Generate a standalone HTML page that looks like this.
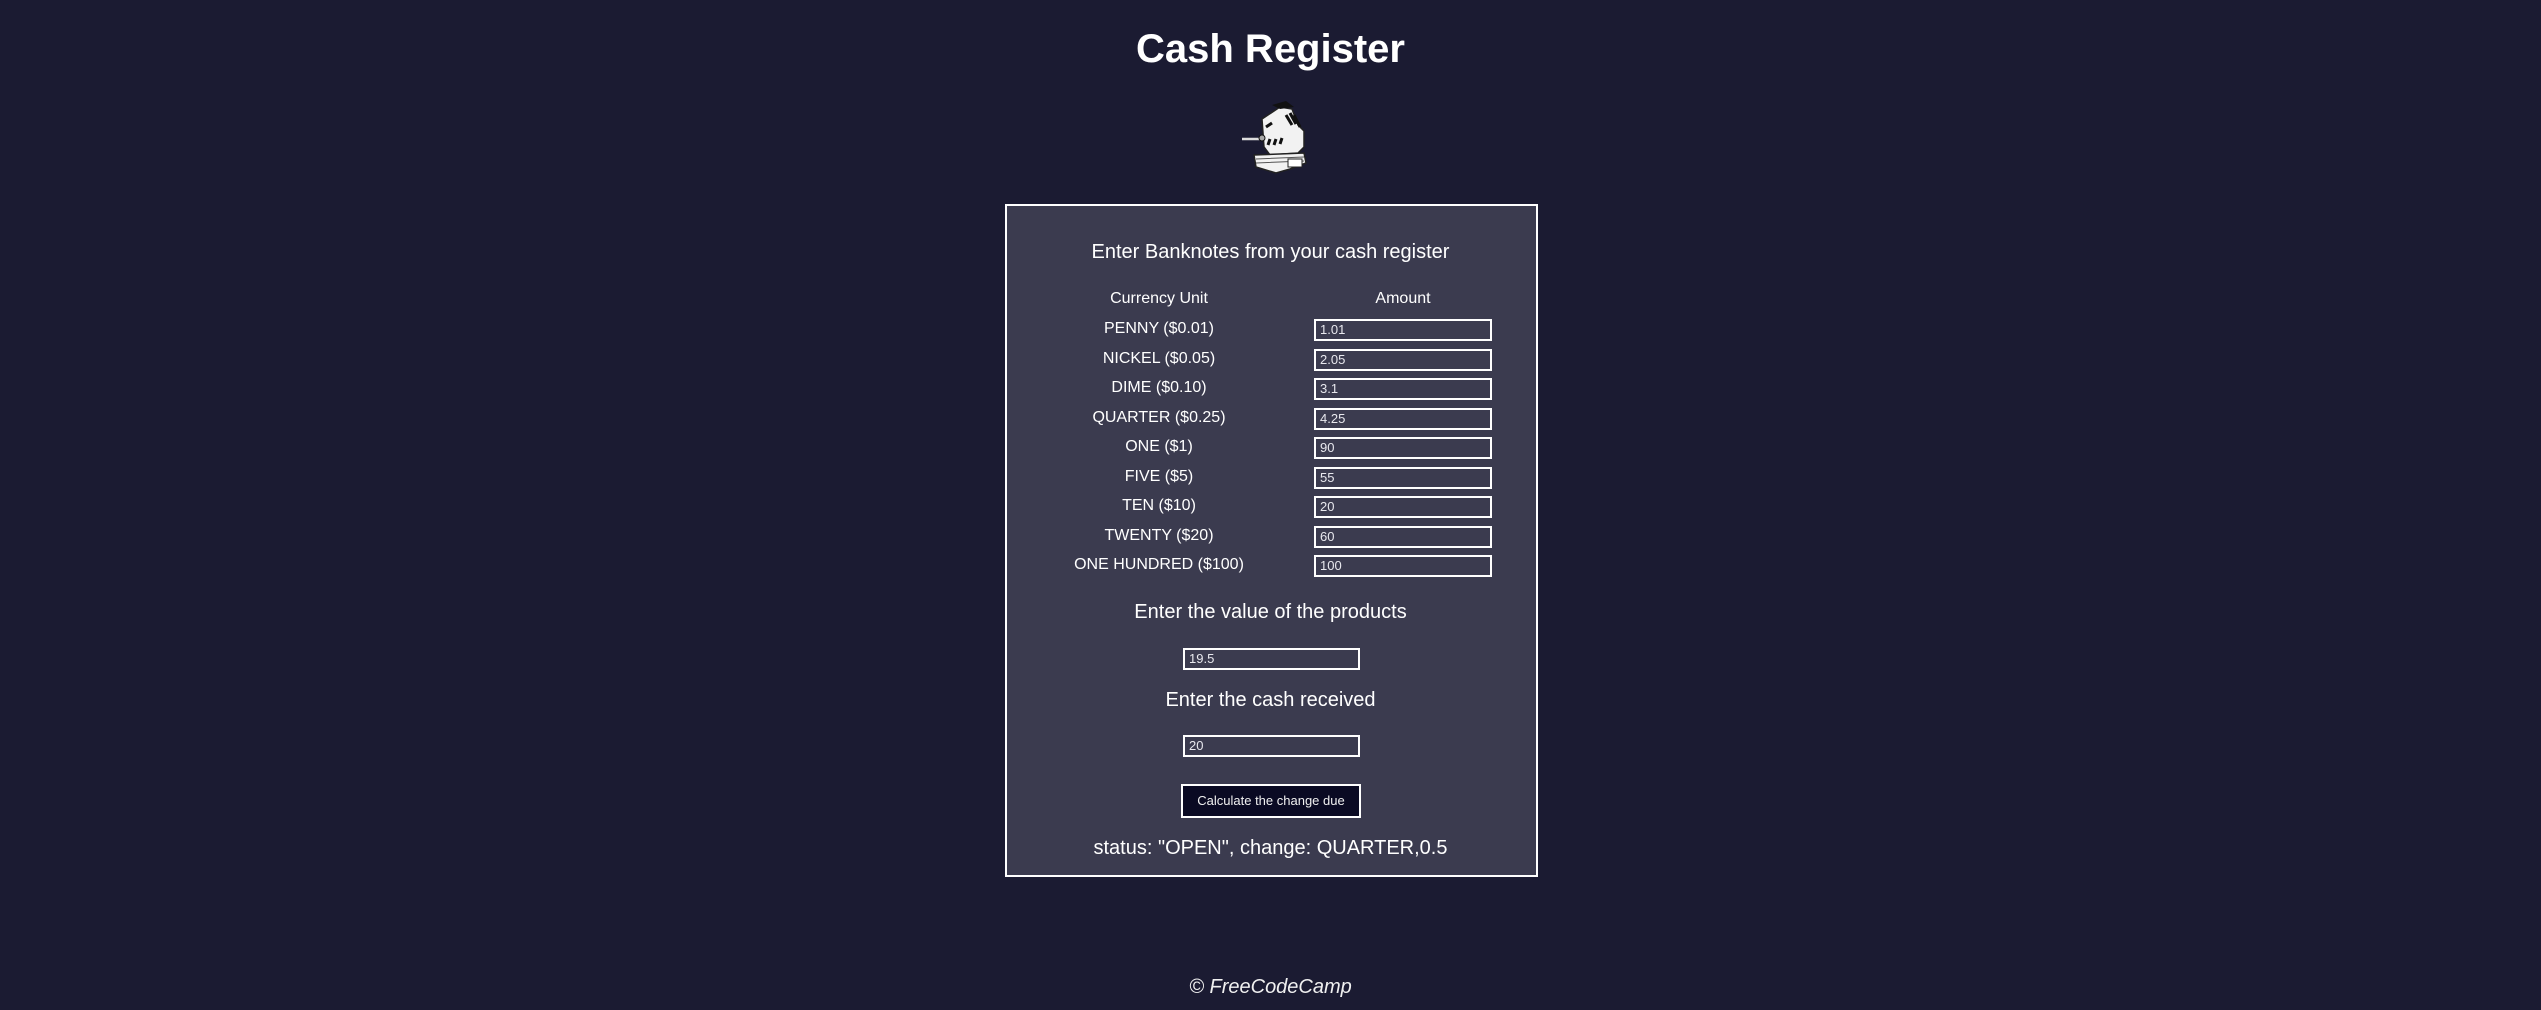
<!DOCTYPE html>
<html><head><meta charset="utf-8"><style>
*{margin:0;padding:0;box-sizing:border-box}
html,body{width:2541px;height:1010px;background:#1b1b32;overflow:hidden;font-family:"Liberation Sans",Arial,sans-serif;color:#fff}
.a{position:absolute}
.c{position:absolute;left:0;width:2541px;text-align:center;white-space:nowrap}
h1{font-size:40px;font-weight:bold}
.box{left:1005px;top:204px;width:533px;height:673px;border:2px solid #fff;background:#3b3b4f}
.inp{position:absolute;border:2px solid #fff;background:#3b3b4f;font-size:13px;color:#e8e8ee;padding-left:4px;line-height:18px}
.lbl{position:absolute;left:1059px;width:200px;text-align:center;font-size:16px;white-space:nowrap}
.btn{left:1181px;top:784px;width:180px;height:34px;background:#0a0a23;border:2px solid #fff;font-size:13px;text-align:center;line-height:30px;color:#f0f0f0}
</style></head><body>
<h1 class="c" style="top:27px">Cash Register</h1>
<svg class="a" style="left:1240px;top:97px" width="70" height="78" viewBox="0 0 70 78">
<path d="M22 22 L40 10 L52 12 L58 28 L64 34 L64 50 L58 56 L30 58 L24 50 Z" fill="#f2f2f2" stroke="#222" stroke-width="1.5"/>
<path d="M32 8 L46 4 L54 10 L40 12 Z" fill="#111"/>
<path d="M46 18 L52 28 M50 16 L56 27 M54 18 L60 30" stroke="#111" stroke-width="3"/>
<path d="M26 30 L32 26" stroke="#111" stroke-width="3"/>
<path d="M2 42 L20 42" stroke="#ddd" stroke-width="2.5"/>
<circle cx="22" cy="41" r="3" fill="#aaa" stroke="#111"/>
<path d="M28 48 L30 42 M34 48 L36 42 M40 47 L42 41" stroke="#111" stroke-width="3"/>
<path d="M14 58 L64 56 L66 66 L50 72 L36 76 L16 70 Z" fill="#f2f2f2" stroke="#222" stroke-width="1.5"/>
<path d="M16 62 L64 60 M16 66 L64 64" stroke="#555" stroke-width="1"/>
<rect x="48" y="62" width="14" height="8" fill="#fff" stroke="#222"/>
</svg>
<div class="a box"></div>
<div class="c" style="top:241px;font-size:20px">Enter Banknotes from your cash register</div>
<div class="lbl" style="top:290px">Currency Unit</div>
<div class="lbl" style="top:290px;left:1303px">Amount</div>
<div class="lbl" style="top:320px">PENNY ($0.01)</div>
<div class="lbl" style="top:349.5px">NICKEL ($0.05)</div>
<div class="lbl" style="top:379px">DIME ($0.10)</div>
<div class="lbl" style="top:408.5px">QUARTER ($0.25)</div>
<div class="lbl" style="top:438px">ONE ($1)</div>
<div class="lbl" style="top:467.5px">FIVE ($5)</div>
<div class="lbl" style="top:497px">TEN ($10)</div>
<div class="lbl" style="top:526.5px">TWENTY ($20)</div>
<div class="lbl" style="top:556px">ONE HUNDRED ($100)</div>
<div class="inp" style="left:1314px;top:319px;width:178px;height:22px">1.01</div>
<div class="inp" style="left:1314px;top:348.5px;width:178px;height:22px">2.05</div>
<div class="inp" style="left:1314px;top:378px;width:178px;height:22px">3.1</div>
<div class="inp" style="left:1314px;top:407.5px;width:178px;height:22px">4.25</div>
<div class="inp" style="left:1314px;top:437px;width:178px;height:22px">90</div>
<div class="inp" style="left:1314px;top:466.5px;width:178px;height:22px">55</div>
<div class="inp" style="left:1314px;top:496px;width:178px;height:22px">20</div>
<div class="inp" style="left:1314px;top:525.5px;width:178px;height:22px">60</div>
<div class="inp" style="left:1314px;top:555px;width:178px;height:22px">100</div>
<div class="c" style="top:601px;font-size:20px">Enter the value of the products</div>
<div class="inp" style="left:1183px;top:648px;width:177px;height:22px">19.5</div>
<div class="c" style="top:689px;font-size:20px">Enter the cash received</div>
<div class="inp" style="left:1183px;top:735px;width:177px;height:22px">20</div>
<div class="a btn">Calculate the change due</div>
<div class="c" style="top:837px;font-size:20px">status: "OPEN", change: QUARTER,0.5</div>
<div class="c" style="top:976px;font-size:20px;font-style:italic;color:#f0f0f0">© FreeCodeCamp</div>
</body></html>
